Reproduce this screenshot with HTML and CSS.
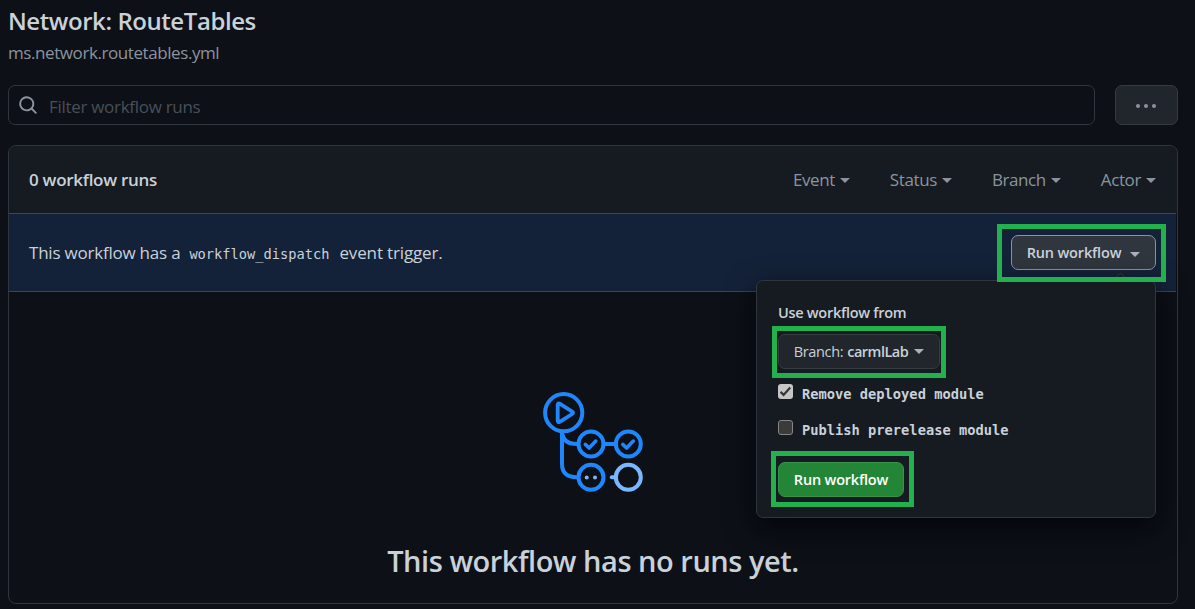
FILE: index.html
```html
<!DOCTYPE html>
<html lang="en">
<head>
<meta charset="utf-8">
<title>Network: RouteTables</title>
<link rel="stylesheet" href="styles.css">
</head>
<body>
<main class="page">
  <h1 class="title"><span>Network: RouteTables</span></h1>
  <p class="file"><span>ms.network.routetables.yml</span></p>
  <div class="toolbar">
    <div class="search">
      <svg class="search-icon" viewBox="0 0 16 16" width="20" height="20" fill="currentColor"><path d="M11.5 7a4.5 4.5 0 1 1-9 0 4.5 4.5 0 0 1 9 0Zm-.82 4.74a6 6 0 1 1 1.06-1.06l3.04 3.04a.75.75 0 1 1-1.06 1.06l-3.04-3.04Z" fill-rule="evenodd"/></svg>
      <span class="placeholder">Filter workflow runs</span>
    </div>
    <button class="more" aria-label="More"><i></i><i></i><i></i></button>
  </div>
  <section class="box">
    <header class="box-header">
      <strong class="count">0 workflow runs</strong>
      <nav class="filters">
        <span class="filter event"><span>Event</span><i class="caret"></i></span>
        <span class="filter status"><span>Status</span><i class="caret"></i></span>
        <span class="filter branch"><span>Branch</span><i class="caret"></i></span>
        <span class="filter actor"><span>Actor</span><i class="caret"></i></span>
      </nav>
    </header>
    <div class="dispatch">
      <p class="dispatch-text"><span class="lead">This workflow has a</span><code>workflow_dispatch</code><span class="tail">event trigger.</span></p>
      <div class="run-menu">
        <button class="run-button"><span>Run workflow</span><i class="caret"></i></button>
        <div class="popover">
          <div class="pointer"></div>
          <p class="label"><span>Use workflow from</span></p>
          <div class="marked">
            <button class="branch-button"><span>Branch:</span><b>carmlLab</b><i class="caret"></i></button>
            <div class="mark mark-branch"></div>
          </div>
          <div class="option">
            <span class="check checked"><svg viewBox="0 0 15 15" width="15" height="15"><path d="M2.6 7.9l3 3L12.2 3.4" fill="none" stroke="#34363a" stroke-width="2.2"/></svg></span>
            <span class="option-text">Remove deployed module</span>
          </div>
          <div class="option">
            <span class="check"></span>
            <span class="option-text">Publish prerelease module</span>
          </div>
          <div class="marked submit-row">
            <button class="submit"><span>Run workflow</span></button>
            <div class="mark mark-submit"></div>
          </div>
        </div>
        <div class="mark mark-run"></div>
      </div>
    </div>
    <div class="empty">
      <svg class="flow" viewBox="12 11 102 102" width="102" height="102" fill="none" stroke="#1f86fc" stroke-width="4">
        <circle cx="33.7" cy="32.7" r="18.6"/>
        <path d="M27.7 24.8v15.8q0 2.2 2 1.2L42.2 34q1.7-1.2 0-2.4L29.7 23.7q-2-1-2 1.1Z" stroke-linejoin="round" stroke-width="3.8"/>
        <path d="M32 52v32q0 13.3 15 13.3M32 52q1 12 15 12M75 64h9.5"/>
        <circle cx="61" cy="64" r="12.5"/>
        <circle cx="98.3" cy="64" r="12.5"/>
        <circle cx="61" cy="97.3" r="12.5"/>
        <path d="M55.3 64.4l3.8 3.6 6.7-6.9M92.8 64.4l3.8 3.6 6.7-6.9" stroke-linecap="round" stroke-linejoin="round" stroke-width="3.6"/>
        <g stroke="#79b8ff"><circle cx="98.3" cy="97.3" r="12.5"/><path d="M81.8 97.3h4" stroke-linecap="round"/></g>
        <g fill="#79b8ff" stroke="none"><circle cx="56.7" cy="97.4" r="2"/><circle cx="65" cy="97.4" r="2"/></g>
      </svg>
      <h2 class="empty-title"><span>This workflow has no runs yet.</span></h2>
    </div>
  </section>
</main>
</body>
</html>
```
FILE: styles.css
```css
* { box-sizing: border-box; }
body {
  margin: 0;
  background: #0d1017;
  color: #c9d1d9;
  font-family: "Open Sans", "Noto Sans", sans-serif;
  font-size: 17px;
  overflow: hidden;
}
h1, h2, p { margin: 0; }
button { font-family: inherit; margin: 0; padding: 0; }
span, b, strong, code { white-space: nowrap; }
.page { height: 609px; padding: 6px 17px 5px 8px; display: flex; flex-direction: column; }
.title { font-size: 24px; line-height: 30px; font-weight: 600; height: 30px; letter-spacing: -.43px; }
.file { font-size: 17px; line-height: 24px; height: 49px; padding-top: 5px; color: #8b949e; letter-spacing: -.42px; }
.toolbar { display: flex; gap: 20px; height: 40px; margin-bottom: 20px; }
.search {
  flex: 1; display: flex; align-items: center; padding-left: 9px; gap: 11px;
  border: 1px solid #30363d; border-radius: 7px; color: #484f58;
}
.search-icon { color: #8b949e; }
.placeholder { padding-top: 2px; letter-spacing: -.3px; }
.more {
  width: 63px; display: flex; align-items: center; justify-content: center; gap: 4px;
  border: 1px solid #363b42; border-radius: 7px; background: #21262d; padding: 2px 2px 0 0;
}
.more i { width: 4px; height: 4px; border-radius: 50%; background: #8b949e; }
.box { flex: 1; border: 1px solid #30363d; border-radius: 8px; display: flex; flex-direction: column; }
.box-header {
  height: 67px; padding: 0 21px 1px 20px; display: flex; align-items: center; justify-content: space-between;
  background: #161b22; border-radius: 7px 7px 0 0;
}
.count { font-weight: 600; font-size: 17px; letter-spacing: -.28px; }
.filters { display: flex; gap: 40px; color: #8b949e; letter-spacing: -.4px; }
.filter { display: flex; align-items: center; gap: 5px; }
.caret {
  width: 0; height: 0; flex: none; margin-top: 3px;
  border: 5px solid transparent; border-top-color: currentColor; border-bottom: 0;
}
.dispatch {
  height: 79px; margin-right: 1px; padding: 0 20px; display: flex; justify-content: space-between; align-items: center;
  background: #142239; border-top: 1px solid #1f4b88; border-bottom: 1px solid #1f4b88;
}
.dispatch-text { display: flex; align-items: baseline; }
.lead { letter-spacing: -.22px; }
.tail { letter-spacing: -.15px; }
code { font: 13.7px "DejaVu Sans Mono", monospace; margin: 0 10px 0 9px; }
.run-menu { position: relative; }
.run-button {
  width: 145px; height: 35px; border: 1px solid #8b949e; border-radius: 7px; background: #30363d; color: #c9d1d9;
  display: flex; align-items: center; justify-content: center; gap: 9px; font-size: 14.5px; font-weight: 600;
  letter-spacing: -.17px;
}
.run-button .caret, .branch-button .caret { color: #a9b1ba; }
.branch-button .caret { margin-top: 0; }
.popover {
  position: absolute; right: 0; top: 45px; width: 400px; height: 238px; padding: 21px 20px 20px 21px;
  border: 1px solid #30363d; border-radius: 7px; background: #161b22; box-shadow: 0 10px 30px #010409d9;
}
.pointer {
  position: absolute; right: 28px; top: -6px; width: 13px; height: 13px; background: #161b22;
  border: 1px solid #30363d; border-right: 0; border-bottom: 0; transform: rotate(45deg);
  clip-path: polygon(0 0, 100% 0, 0 100%);
}
.label { font-size: 14.5px; font-weight: 600; line-height: 22px; height: 32px; letter-spacing: -.28px; }
.marked { position: relative; height: 35px; }
.branch-button {
  width: 162px; height: 35px; border: 1px solid #363b42; border-radius: 7px; background: #21262d; color: #c9d1d9;
  display: flex; align-items: center; justify-content: center; gap: 4px; font-size: 14.5px; letter-spacing: -.35px;
}
b { font-weight: 600; letter-spacing: -.5px; margin-right: 2px; }
.mark { position: absolute; border: 5px solid #22b14c; pointer-events: none; }
.mark-run { left: -14px; top: -11px; width: 169px; height: 58px; }
.mark-branch { left: -6px; top: -8px; width: 174px; height: 52px; }
.mark-submit { left: -7px; top: -11px; width: 143px; height: 56px; }
.option { display: flex; gap: 9px; height: 36px; padding-top: 15px; }
.check { width: 15px; height: 15px; flex: none; border: 1px solid #858585; border-radius: 3px; background: #3b3b3b; }
.checked { border: 0; background: #c6c6c6; }
.check svg { display: block; }
.option-text { font: bold 13.72px/20px "DejaVu Sans Mono", monospace; height: 20px; }
.submit-row { margin-top: 21px; }
.submit {
  width: 126px; height: 35px; border: 1px solid #38924a; border-radius: 7px; background: #238636; color: #fff;
  font-size: 14.5px; font-weight: 600; letter-spacing: -.2px;
}
.empty { flex: 1; display: flex; flex-direction: column; align-items: center; padding-top: 99px; }
.flow { display: block; }
.empty-title { font-size: 29px; line-height: 40px; font-weight: 600; margin-top: 48px; letter-spacing: -.47px; }
```
